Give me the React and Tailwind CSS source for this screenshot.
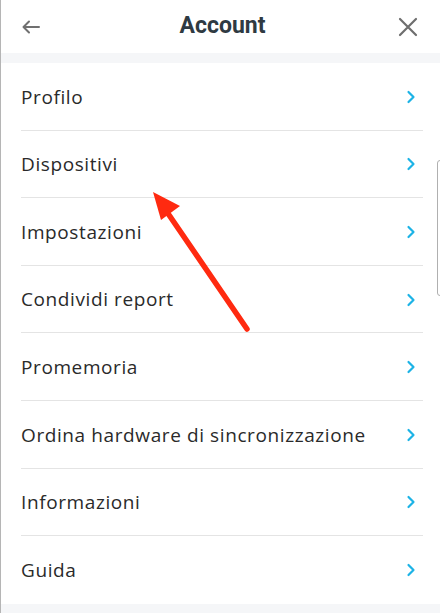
import { useState } from "react";

const items = [
  "Profilo",
  "Dispositivi",
  "Impostazioni",
  "Condividi report",
  "Promemoria",
  "Ordina hardware di sincronizzazione",
  "Informazioni",
  "Guida",
];

const Chevron = () => (
  <svg width="10" height="14" viewBox="0 0 10 14" fill="none">
    <path d="M2.5 2 L7.5 7 L2.5 12" stroke="#1cb3e6" strokeWidth="2.2" strokeLinecap="round" strokeLinejoin="round" />
  </svg>
);

const App = () => {
  const [selected, setSelected] = useState(null);

  return (
    <div className="relative w-[440px] h-[613px] bg-[#f5f6f8] overflow-hidden border-l border-[#b5b5b5]">
      {/* Header */}
      <div className="h-[53px] bg-white flex items-center justify-between pl-[20px] pr-[22px]">
        <svg width="20" height="16" viewBox="0 0 20 16" fill="none">
          <path d="M18 8 H3 M8 2.5 L2.5 8 L8 13.5" stroke="#707070" strokeWidth="2" strokeLinecap="round" strokeLinejoin="round" />
        </svg>
        <div className="text-[23px] font-bold text-[#2f3a42] font-['Roboto',sans-serif] ml-[6px]">Account</div>
        <svg width="20" height="20" viewBox="0 0 20 20" fill="none">
          <path d="M2 2 L18 18 M18 2 L2 18" stroke="#6e6e6e" strokeWidth="2.2" strokeLinecap="round" />
        </svg>
      </div>

      {/* List */}
      <div className="mt-[10px] bg-white">
        {items.map((label, i) => (
          <div
            key={label}
            onClick={() => setSelected(label)}
            className={`h-[67.6px] flex items-center justify-between pl-[20px] pr-[24px] cursor-pointer ${
              selected === label ? "bg-gray-50" : ""
            }`}
          >
            <span className="text-[19px] tracking-[0.6px] text-[#2a2a2a] font-['Open_Sans',sans-serif]">{label}</span>
            <Chevron />
            {i < items.length - 1 && (
              <div className="absolute left-[20px] right-[17px] h-px bg-[#e4e4e4]" style={{ top: 53 + 10 + (i + 1) * 67.6 - 1 }} />
            )}
          </div>
        ))}
      </div>

      {/* Scrollbar hint */}
      <div className="absolute right-[-4px] top-[160px] w-[7px] h-[136px] rounded-[3px] border border-[#b0b0b0] bg-white" />

      {/* Red annotation arrow */}
      <svg className="absolute left-0 top-0 pointer-events-none" width="440" height="613">
        <line x1="246" y1="329" x2="166" y2="212" stroke="#ff2a10" strokeWidth="5.5" strokeLinecap="round" />
        <polygon points="152,192 179,206 160,220" fill="#ff2a10" />
      </svg>
    </div>
  );
};

export default App;
